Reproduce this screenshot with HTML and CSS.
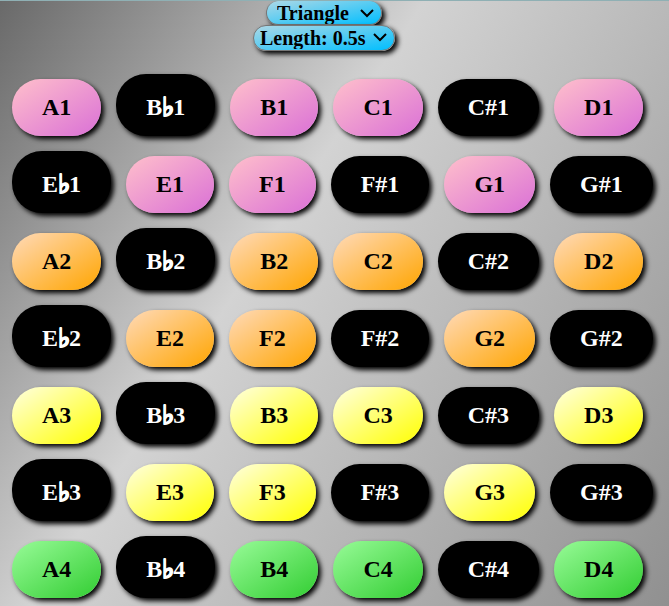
FILE: index.html
```html
<!DOCTYPE html>
<html lang="en">
<head>
<meta charset="utf-8">
<title>Keyboard</title>
<link rel="stylesheet" href="styles.css">
</head>
<body>
<header class="controls">
  <div class="picker">
    <select class="picker-select picker-wave" aria-label="Waveform"><option>Triangle</option></select>
    <svg class="picker-arrow" viewBox="0 0 14 10" aria-hidden="true"><path d="M1 2 7 8 13 2"/></svg>
  </div>
  <div class="picker">
    <select class="picker-select picker-length" aria-label="Note length"><option>Length: 0.5s</option></select>
    <svg class="picker-arrow" viewBox="0 0 14 10" aria-hidden="true"><path d="M1 2 7 8 13 2"/></svg>
  </div>
</header>
<main class="keys">
  <div class="row">
    <button class="key pink">A1</button>
    <button class="key black flat">B<span class="sign">♭</span>1</button>
    <button class="key pink">B1</button>
    <button class="key pink">C1</button>
    <button class="key black">C#1</button>
    <button class="key pink">D1</button>
  </div>
  <div class="row">
    <button class="key black flat">E<span class="sign">♭</span>1</button>
    <button class="key pink">E1</button>
    <button class="key pink">F1</button>
    <button class="key black">F#1</button>
    <button class="key pink">G1</button>
    <button class="key black">G#1</button>
  </div>
  <div class="row">
    <button class="key orange">A2</button>
    <button class="key black flat">B<span class="sign">♭</span>2</button>
    <button class="key orange">B2</button>
    <button class="key orange">C2</button>
    <button class="key black">C#2</button>
    <button class="key orange">D2</button>
  </div>
  <div class="row">
    <button class="key black flat">E<span class="sign">♭</span>2</button>
    <button class="key orange">E2</button>
    <button class="key orange">F2</button>
    <button class="key black">F#2</button>
    <button class="key orange">G2</button>
    <button class="key black">G#2</button>
  </div>
  <div class="row">
    <button class="key yellow">A3</button>
    <button class="key black flat">B<span class="sign">♭</span>3</button>
    <button class="key yellow">B3</button>
    <button class="key yellow">C3</button>
    <button class="key black">C#3</button>
    <button class="key yellow">D3</button>
  </div>
  <div class="row">
    <button class="key black flat">E<span class="sign">♭</span>3</button>
    <button class="key yellow">E3</button>
    <button class="key yellow">F3</button>
    <button class="key black">F#3</button>
    <button class="key yellow">G3</button>
    <button class="key black">G#3</button>
  </div>
  <div class="row">
    <button class="key green">A4</button>
    <button class="key black flat">B<span class="sign">♭</span>4</button>
    <button class="key green">B4</button>
    <button class="key green">C4</button>
    <button class="key black">C#4</button>
    <button class="key green">D4</button>
  </div>
</main>
</body>
</html>
```
FILE: styles.css
```css
* {
  box-sizing: border-box;
}

body {
  margin: 0;
  min-height: 100vh;
  border-top: 1px solid #8fb0b4;
  background: linear-gradient(123deg, #696969, #d3d3d3 40%, #909090) no-repeat;
  font-family: "Liberation Serif", "Times New Roman", serif;
}

.controls {
  display: flex;
  flex-direction: column;
  align-items: center;
  padding-right: 21px;
}

.picker {
  position: relative;
}

.picker-select {
  display: block;
  appearance: none;
  height: 26px;
  padding: 0 32px 0 10px;
  border: 1px solid #767676;
  border-radius: 15px;
  background: linear-gradient(to bottom right, lightblue, deepskyblue);
  box-shadow: 3px 3px 5px black;
  color: black;
  font: bold 20px "Liberation Serif", "Times New Roman", serif;
}

.picker-wave {
  height: 24px;
  border-top: 0;
}

.picker-length {
  padding: 0 28px 0 6px;
}

.picker-arrow {
  position: absolute;
  right: 8px;
  top: 7px;
  width: 14px;
  height: 10px;
  fill: none;
  stroke: black;
  stroke-width: 2;
  pointer-events: none;
}

.keys {
  display: flex;
  flex-direction: column;
  gap: 15px;
  padding: 23px 12px 0;
}

.row {
  display: flex;
  align-items: flex-end;
  gap: 15px;
}

.key {
  flex: none;
  padding: 15px 30px;
  border: 0;
  border-radius: 30px;
  box-shadow: 3px 3px 5px black;
  color: black;
  font: bold 24px/27px "Liberation Serif", "Times New Roman", serif;
}

.black {
  background: black;
  color: white;
}

.flat {
  padding-top: 20px;
}

.sign {
  margin-right: -1px;
  font-size: 26px;
  line-height: 1px;
  vertical-align: -1px;
  -webkit-text-stroke: 1px white;
}

.pink {
  background: linear-gradient(to bottom right, pink, orchid);
}

.orange {
  background: linear-gradient(to bottom right, peachpuff, orange);
}

.yellow {
  background: linear-gradient(to bottom right, lightyellow, yellow);
}

.green {
  background: linear-gradient(to bottom right, palegreen, limegreen);
}
```
